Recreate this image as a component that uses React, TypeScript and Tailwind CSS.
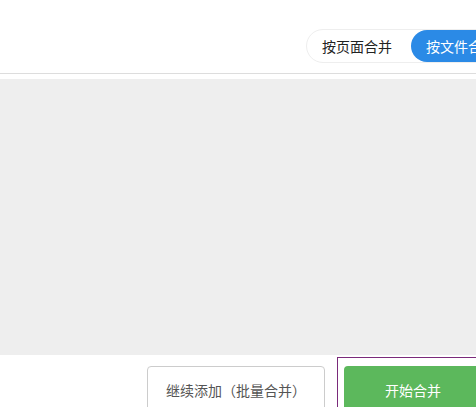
import { useState } from 'react';

export default function App() {
  const [mode, setMode] = useState<'page' | 'file'>('file');

  return (
    <div
      className="w-[476px] h-[407px] overflow-hidden bg-white"
      style={{ fontFamily: '"Microsoft YaHei", "Noto Sans CJK SC", "Liberation Sans", sans-serif' }}
    >
      <div className="w-[540px]">
        <header className="h-[74px] border-b border-[#dddddd] flex justify-end items-start pt-[29px] pr-[28px]">
          <div className="flex items-center h-[34px] rounded-full border border-[#eeeeee] bg-white">
            <button
              onClick={() => setMode('page')}
              className={`h-[32px] pl-[15px] pr-[15px] rounded-full text-[14px] leading-none ${
                mode === 'page' ? 'bg-[#2b8ae6] text-white' : 'text-[#222222]'
              }`}
            >
              按页面合并
            </button>
            <button
              onClick={() => setMode('file')}
              className={`ml-[4px] h-[32px] px-[15px] rounded-full text-[14px] leading-none ${
                mode === 'file' ? 'bg-[#2b8ae6] text-white' : 'text-[#222222]'
              }`}
            >
              按文件合并
            </button>
          </div>
        </header>

        <div className="h-[5px] bg-white" />
        <main className="h-[276px] bg-[#eeeeee]" />

        <footer className="flex justify-end items-start gap-[12px] pt-[2px] pr-[51px]">
          <button className="mt-[9px] h-[48px] w-[178px] rounded-[4px] border border-[#cccccc] bg-white text-[14px] text-[#555555]">
            继续添加（批量合并）
          </button>
          <div className="border border-[#7a2a7a] pt-[8px] pl-[6px] pr-[6px]">
            <button className="h-[48px] px-[41px] rounded-[4px] bg-[#5cb85c] text-[14px] text-white">
              开始合并
            </button>
          </div>
        </footer>
      </div>
    </div>
  );
}
